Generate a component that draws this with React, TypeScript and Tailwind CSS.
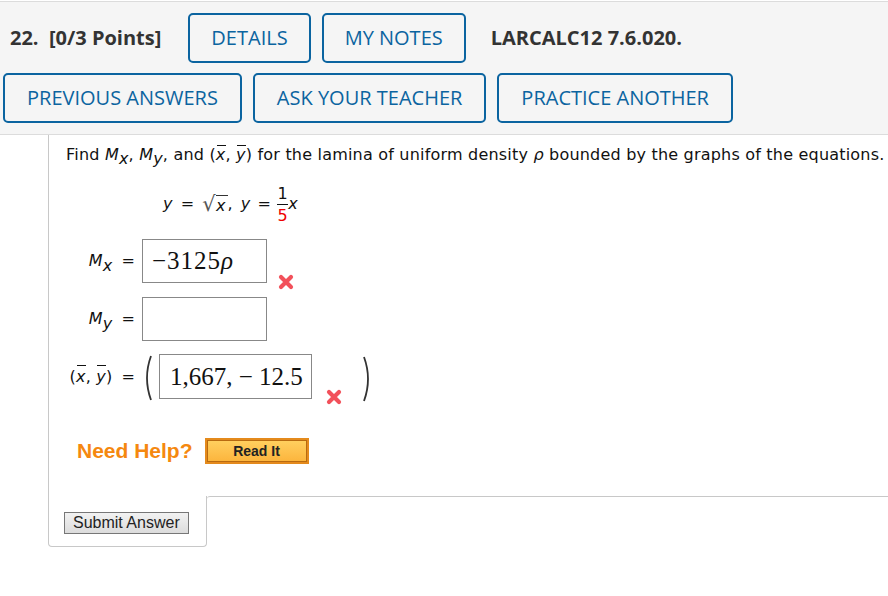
import React from 'react';

const sans = "font-['Open_Sans','Noto_Sans',sans-serif]";
const verdana = "font-['DejaVu_Sans','Verdana',sans-serif]";
const serif = "font-['Liberation_Serif','DejaVu_Serif',serif]";
const arial = "font-['Liberation_Sans',Arial,sans-serif]";

function HeadButton({ children, wide }: { children: React.ReactNode; wide?: boolean }) {
  return (
    <button className={`h-[50px] ${wide ? 'px-[22px]' : 'px-[21px]'} border-2 border-[#0b64a0] rounded-[5px] bg-[#f5f5f5] text-[#0b64a0] text-[20px] leading-none`}>
      {children}
    </button>
  );
}

function WrongMark() {
  return (
    <svg width="16" height="16" viewBox="0 0 16 16" className="shrink-0">
      <path d="M3 3 L13 13 M13 3 L3 13" stroke="#f2505a" strokeWidth="4.2" strokeLinecap="round" />
    </svg>
  );
}

function Bar({ children }: { children: React.ReactNode }) {
  return <span className="relative inline-block">
    <span className="absolute left-[1px] right-0 top-[0px] h-px bg-[#111]" />
    {children}
  </span>;
}

function Paren({ right }: { right?: boolean }) {
  return (
    <svg width="12" height="48" viewBox="0 0 12 48" className="shrink-0">
      <path d={right ? 'M3 2 Q11 24 3 46' : 'M9 2 Q1 24 9 46'} stroke="#333" strokeWidth="1.8" fill="none" />
    </svg>
  );
}

export default function App() {
  return (
    <div className="min-h-screen bg-white text-[#111]">
      {/* question header */}
      <div className={`${sans} mt-px bg-[#f5f5f5] border-y border-[#dcdcdc] pt-[11px] pb-[11px] pl-[3px]`}>
        <div className="flex items-center h-[50px]">
          <span className="pl-[7px] pr-[27px] text-[20px] font-bold text-[#333] whitespace-pre">22.  [0/3 Points]</span>
          <HeadButton>DETAILS</HeadButton>
          <span className="w-[11px]" />
          <HeadButton>MY NOTES</HeadButton>
          <span className="pl-[25px] text-[20px] font-bold text-[#333]">LARCALC12 7.6.020.</span>
        </div>
        <div className="flex gap-[11px] mt-[10px]">
          <HeadButton wide>PREVIOUS ANSWERS</HeadButton>
          <HeadButton wide>ASK YOUR TEACHER</HeadButton>
          <HeadButton wide>PRACTICE ANOTHER</HeadButton>
        </div>
      </div>

      {/* question body */}
      <div className={`${verdana} ml-[48px] border-l border-[#c8c8c8] pl-[17px] pt-[10px] pb-[32px] text-[16px] tracking-[0.2px]`}>
        <p className="whitespace-nowrap leading-[20px]">
          Find <i>M</i><sub className="relative top-[4px] text-[16px] italic">x</sub>, <i>M</i><sub className="relative top-[4px] text-[16px] italic">y</sub>, and (<Bar><i>x</i></Bar>, <Bar><i>y</i></Bar>) for the lamina of uniform density <i>ρ</i> bounded by the graphs of the equations.
        </p>

        <div className="flex items-center ml-[97px] mt-[17px] h-[44px] whitespace-nowrap">
          <i>y</i>
          <span className="ml-[8px] mr-[8px]">=</span>
          <span className="text-[#555] text-[21px] leading-none">√</span>
          <span className="border-t border-[#333] leading-[19px] mt-[1px] pr-[2px]"><i>x</i></span>
          <span className="mr-[8px]">,</span>
          <i>y</i>
          <span className="ml-[7px] mr-[6px]">=</span>
          <span className="inline-flex flex-col items-center leading-[21px]">
            <span>1</span>
            <span className="h-px w-[11px] bg-[#111]" />
            <span className="text-[#e00]">5</span>
          </span>
          <i>x</i>
        </div>

        <div className="mt-[13px] flex items-end">
          <div className="w-[70px] h-[44px] flex items-center justify-end gap-[9px] pr-[1px]">
            <span><i>M</i><sub className="relative top-[5px] text-[16px] italic">x</sub></span>
            <span>=</span>
          </div>
          <div className={`${serif} ml-[6px] w-[125px] h-[44px] border border-[#888] pl-[9px] flex items-center text-[25px] tracking-[1px]`}>−3125<i>ρ</i></div>
          <span className="ml-[11px] mb-[-7px]"><WrongMark /></span>
        </div>

        <div className="mt-[14px] flex items-center">
          <div className="w-[70px] h-[44px] flex items-center justify-end gap-[9px] pr-[1px]">
            <span><i>M</i><sub className="relative top-[5px] text-[16px] italic">y</sub></span>
            <span>=</span>
          </div>
          <div className="ml-[6px] w-[125px] h-[44px] border border-[#888]" />
        </div>

        <div className="mt-[13px] flex items-start h-[49px]">
          <div className="w-[70px] h-[45px] flex items-center justify-end gap-[9px] pr-[1px]">
            <span>(<Bar><i>x</i></Bar>, <Bar><i>y</i></Bar>)</span>
            <span>=</span>
          </div>
          <div className="ml-[6px]"><Paren /></div>
          <div className={`${serif} ml-[5px] w-[153px] h-[45px] border border-[#888] pl-[10px] flex items-center text-[25px] tracking-normal whitespace-nowrap`}>1,667, − 12.5</div>
          <span className="ml-[14px] mt-[35px]"><WrongMark /></span>
          <div className="ml-[19px] mt-[1px]"><Paren right /></div>
        </div>

        <div className="mt-[35px] ml-[11px] flex items-center h-[26px] tracking-normal">
          <span className={`${arial} font-bold text-[21px] text-[#f5880f]`}>Need Help?</span>
          <button className="ml-[12px] w-[104px] h-[26px] bg-[#e48a1c] p-[2px]">
            <span className={`${arial} flex items-center justify-center h-full border border-[#b86a10] bg-gradient-to-b from-[#ffcf5e] to-[#fcb53d] font-bold text-[14px] text-[#222]`}>Read It</span>
          </button>
        </div>
      </div>

      {/* footer */}
      <div className="flex">
        <div className="ml-[48px] w-[159px] h-[51px] border-l border-b border-r border-[#c8c8c8] rounded-b-[4px] pl-[15px] pt-[14px]">
          <button className={`${arial} text-[16px] leading-[20px] h-[22px] px-[8px] border border-[#777] bg-gradient-to-b from-[#f2f2f2] to-[#dcdcdc] text-[#222]`}>Submit Answer</button>
        </div>
        <div className="flex-1 border-t border-[#c8c8c8] rounded-tl-[3px]" />
      </div>
    </div>
  );
}
